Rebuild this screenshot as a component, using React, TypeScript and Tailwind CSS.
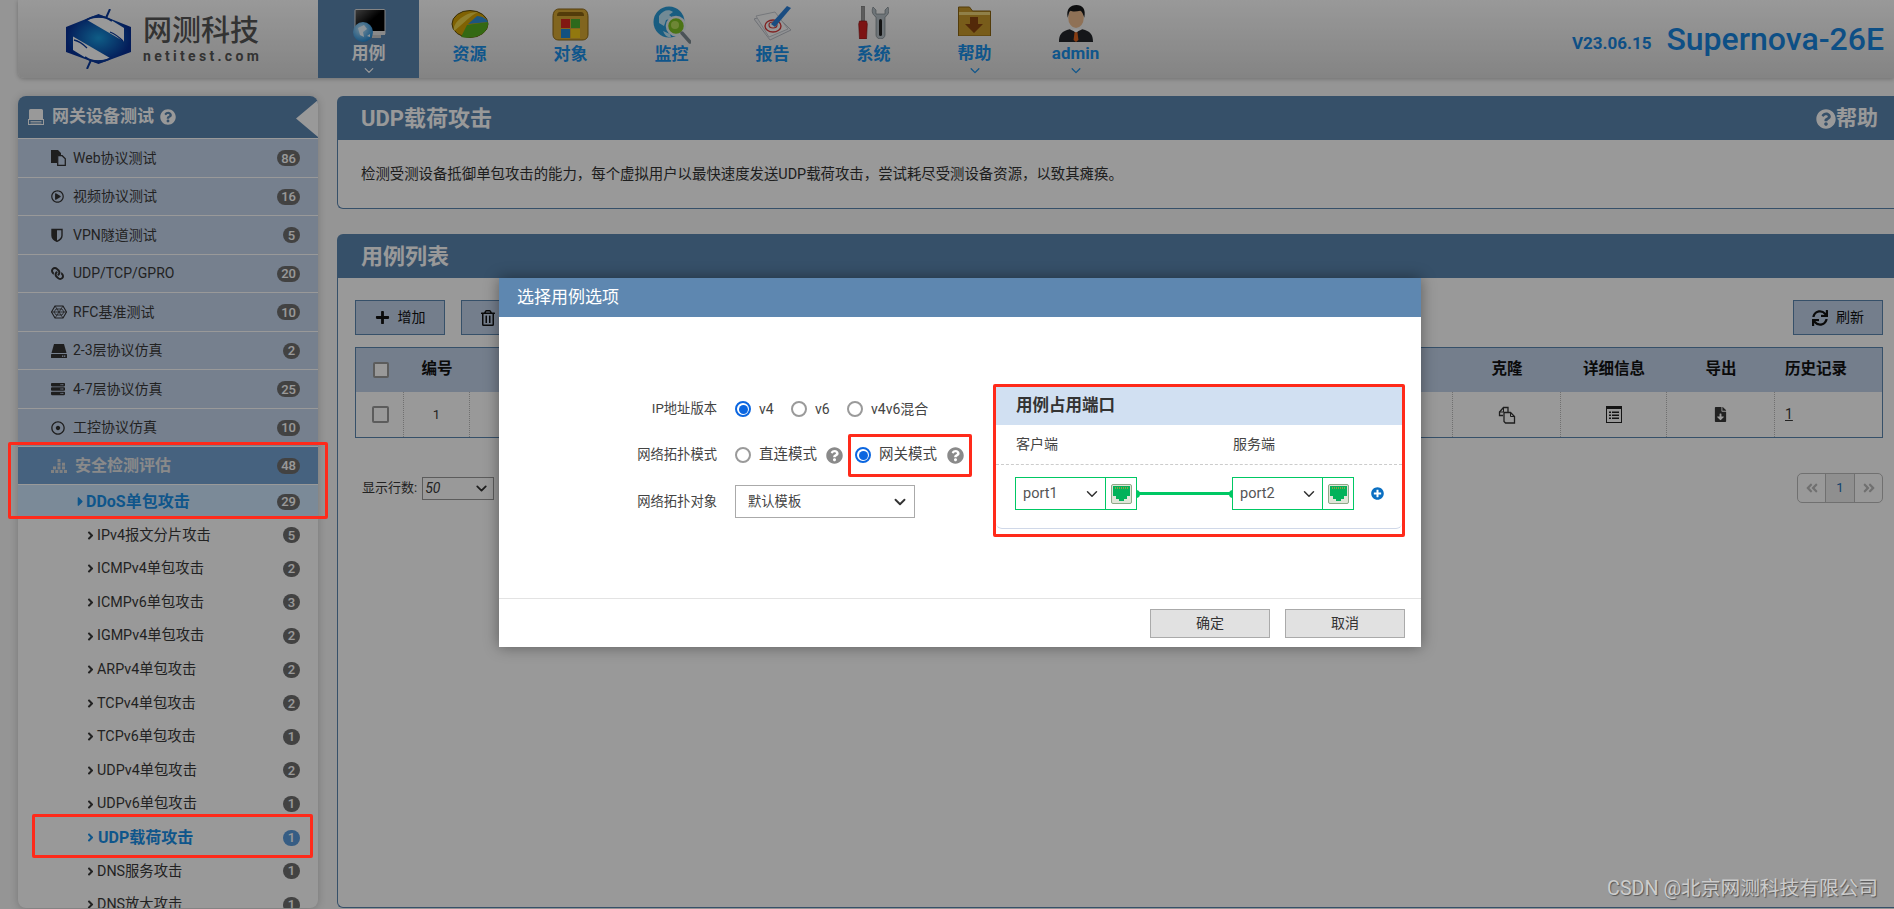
import React from 'react';
import {
  FaQuestionCircle, FaPlus, FaRegTrashAlt, FaSync, FaFileDownload,
  FaAngleDoubleLeft, FaAngleDoubleRight, FaPlusCircle, FaCaretRight, FaAngleRight, FaLink,
  FaRegPlayCircle, FaServer, FaRegDotCircle,
} from 'react-icons/fa';
import { ChevronDown } from 'lucide-react';

const HexIcon = () => (
  <svg width="16" height="14" viewBox="0 0 16 14" fill="none" stroke="#333" strokeWidth="0.8">
    <path d="M4 1h8l3.500 6-3.500 6H4L.5 7z" strokeWidth="1.100" />
    <path d="M4 1l8 12M12 1L4 13M.5 7h15M5 4h6l2 3-2 3H5L3 7z" />
  </svg>
);

const PyramidIcon = () => (
  <svg width="16" height="14" viewBox="0 0 16 14" fill="#d8d8d8">
    <rect x="6.500" y="0" width="3" height="3" />
    <rect x="6.500" y="3.700" width="3" height="3" />
    <rect x="11" y="3.700" width="3" height="3" />
    <rect x="2" y="7.400" width="3" height="3" />
    <rect x="6.500" y="7.400" width="3" height="3" />
    <rect x="11" y="7.400" width="3" height="3" />
    <rect x="0" y="11" width="3" height="3" />
    <rect x="4.300" y="11" width="3" height="3" />
    <rect x="8.600" y="11" width="3" height="3" />
    <rect x="13" y="11" width="3" height="3" />
  </svg>
);

const FilesIcon = () => (
  <svg width="15" height="16" viewBox="0 0 15 16">
    <path d="M0 0h7l3 3v2H6v8H0z" fill="#333" />
    <path d="M6.700 5.700h4.500l3.100 3v6.600H6.700z" fill="none" stroke="#333" strokeWidth="1.300" />
  </svg>
);

const HalfShieldIcon = () => (
  <svg width="12" height="14" viewBox="0 0 12 14">
    <path d="M1 1.500h10v6c0 3-2.500 4.700-5 5.800C3.500 12.200 1 10.500 1 7.500z" fill="none" stroke="#333" strokeWidth="1.400" />
    <path d="M1 1.500h5v11.800C3.500 12.200 1 10.500 1 7.500z" fill="#333" />
  </svg>
);

const DriveIcon = () => (
  <svg width="16" height="14" viewBox="0 0 16 14" fill="#333">
    <path d="M3 0h10l2.500 9H.5z" />
    <rect x="0" y="10" width="16" height="4" rx="0.500" />
    <rect x="11" y="11.500" width="1.300" height="1.300" fill="#c5d5ed" />
    <rect x="13" y="11.500" width="1.300" height="1.300" fill="#c5d5ed" />
  </svg>
);

const TrayIcon = () => (
  <svg width="16" height="16" viewBox="0 0 16 16" fill="#fff">
    <path d="M2.500 0h11A1.500 1.500 0 0 1 15 1.500V10H1V1.500A1.500 1.500 0 0 1 2.500 0z" />
    <rect x="0.500" y="10.500" width="15" height="5" fill="none" stroke="#fff" strokeWidth="1" />
    <path d="M2.500 12.500h11M2.500 14h11" stroke="#fff" strokeWidth="0.800" />
  </svg>
);

const CloneIcon = () => (
  <svg width="18" height="18" viewBox="0 0 18 18" fill="none" stroke="#333" strokeWidth="1.300">
    <path d="M5 9.500H1.500V6L5.500 1.500H10V6" />
    <path d="M6 6.500h6.500l4 4v6.500H7.500L6 15.500z" />
    <path d="M1.500 6H5.500V1.500M12.500 6.500v4h4" strokeWidth="1" />
  </svg>
);

const TableListIcon = () => (
  <svg width="16" height="17" viewBox="0 0 16 17" fill="#222">
    <rect x="0.500" y="0.500" width="15" height="16" fill="none" stroke="#222" />
    <rect x="0" y="0" width="16" height="3" />
    <path d="M3 5.500h2v1.500H3zM6 5.500h7v1.500H6zM3 8.500h2V10H3zM6 8.500h7V10H6zM3 11.500h2V13H3zM6 11.500h7V13H6z" />
  </svg>
);

const Logo = () => (
  <svg width="65" height="60" viewBox="0 0 65 60">
    <defs>
      <radialGradient id="hexg" cx="50%" cy="48%" r="50%">
        <stop offset="0%" stopColor="#1a9be0" />
        <stop offset="100%" stopColor="#072f94" />
      </radialGradient>
    </defs>
    <path d="M32.500 5L65 18v25L32.500 55 0 43V18z" fill="url(#hexg)" />
    <path d="M21 11c8-3 16-3 24 0l13 8v13.500z" fill="#fff" />
    <path d="M7 27.500L44 49c-8 3-16 3-24 0L7 41z" fill="#fff" />
    <path d="M19 12c8-6 19-6 27 0" fill="none" stroke="#0a3a9c" strokeWidth="1.800" />
    <path d="M19 48c8 6 19 6 27 0" fill="none" stroke="#0a3a9c" strokeWidth="1.800" />
    <path d="M44 0l-4 9M21 60l4-9" stroke="#0a3a9c" strokeWidth="2" />
    <path d="M44 23c5 2 9 5 13 9" fill="none" stroke="#0a3a9c" strokeWidth="1.300" />
    <path d="M8 31c5 1 9 4 13 8" fill="none" stroke="#0a3a9c" strokeWidth="1.300" />
  </svg>
);

const CaseIcon = () => (
  <svg width="34" height="34" viewBox="0 0 34 34">
    <defs>
      <linearGradient id="scr" x1="0" y1="0" x2="1" y2="1">
        <stop offset="0%" stopColor="#666" />
        <stop offset="50%" stopColor="#000" />
      </linearGradient>
      <radialGradient id="glb" cx="40%" cy="35%" r="70%">
        <stop offset="0%" stopColor="#bfe8ff" />
        <stop offset="100%" stopColor="#1c86d4" />
      </radialGradient>
    </defs>
    <rect x="3" y="0.500" width="30" height="25" rx="1" fill="url(#scr)" stroke="#ddd" />
    <rect x="3" y="22" width="30" height="4" fill="#e4e4e4" />
    <rect x="20" y="26" width="9" height="3" fill="#ccc" />
    <circle cx="11" cy="23" r="10" fill="url(#glb)" />
    <path d="M6 19l6-3 3 4-4 3 1 5-4-2zM15 27l3-2v3z" fill="#eaf7ff" />
  </svg>
);

const PieIcon = () => (
  <svg width="38" height="29" viewBox="0 0 38 29">
    <ellipse cx="19" cy="14" rx="18" ry="13.500" fill="#d5a306" stroke="#5b4a0a" />
    <path d="M3 21C1 13 14 2 27 2 20 5 12 14 3 21z" fill="#f0d64a" />
    <path d="M10 27l6-12 21-3c1 7-5 13-13 15-5 1-10 1-14 0z" fill="#58b020" />
    <path d="M17 14l9-8c5 0 10 3 11 6z" fill="#2f8fd6" />
  </svg>
);

const ObjectIcon = () => (
  <svg width="37" height="33" viewBox="0 0 37 33">
    <path d="M1 9c0-5 2-8 6-8h23c4 0 6 3 6 8v17c0 4-2 6-6 6H7c-4 0-6-2-6-6z" fill="#d8a934" stroke="#8a6412" />
    <path d="M5 8c0-3 1-4 3-4h21c2 0 3 1 3 4z" fill="#8a6412" />
    <rect x="9" y="11" width="9" height="9" fill="#d8281e" />
    <rect x="19" y="11" width="9" height="9" fill="#4caf2f" />
    <rect x="9" y="21" width="9" height="9" fill="#1f87d8" />
    <rect x="19" y="21" width="9" height="9" fill="#f3c818" />
  </svg>
);

const MonitorIcon = () => (
  <svg width="38" height="38" viewBox="0 0 38 38">
    <circle cx="16" cy="16" r="15.500" fill="#2a9bd8" />
    <path d="M6 10c4-6 10-7 14-4l-4 3 4 3-7 2-2 6-5-3zM10 25l7 3 1 3c-3 1-6-1-8-6z" fill="#bfe7f8" />
    <circle cx="23" cy="20" r="9" fill="#7fc223" stroke="#e7eef0" strokeWidth="2.500" />
    <circle cx="22" cy="19" r="4" fill="#b8e05a" />
    <path d="M29 27l8 9" stroke="#7d8a92" strokeWidth="3.500" strokeLinecap="round" />
  </svg>
);

const ReportIcon = () => (
  <svg width="38" height="36" viewBox="0 0 38 36">
    <path d="M0 14L20 8l17 17-21 10z" fill="#eef0f3" stroke="#b8bcc4" />
    <path d="M2 11l19-4 13 17-19 8z" fill="#fafafa" stroke="#c4c8ce" />
    <ellipse cx="19" cy="21" rx="8" ry="6" fill="none" stroke="#d63a3a" strokeWidth="1.400" />
    <ellipse cx="19" cy="20" rx="4" ry="3" fill="none" stroke="#d63a3a" strokeWidth="1.200" />
    <path d="M17 19L33 1l4 2-16 19z" fill="#2b7fd8" />
  </svg>
);

const ToolsIcon = () => (
  <svg width="31" height="33" viewBox="0 0 31 33">
    <rect x="3.500" y="0" width="3" height="15" fill="#999" stroke="#555" strokeWidth="0.500" />
    <path d="M1.500 15h7l.8 3-.8 15h-7L.7 18z" fill="#d02020" stroke="#7d1010" strokeWidth="0.600" />
    <path d="M15 1c-2 5 0 8 3 10v18c0 2 2 4 4.500 4s4.500-2 4.500-4V11c3-2 5-5 3-10l-3 3v4h-9V4z" fill="#b7c2c8" stroke="#687278" strokeWidth="0.600" />
    <rect x="21" y="13" width="3" height="17" rx="1.500" fill="#222" />
  </svg>
);

const HelpFolderIcon = () => (
  <svg width="33" height="30" viewBox="0 0 33 30">
    <path d="M0.500 1h11l3 4h18v25H.5z" fill="#c99a2c" stroke="#8a6412" />
    <path d="M1 6h31v3H1z" fill="#f1d679" />
    <path d="M12 11h8v7h5l-9 9-9-9h5z" fill="#8a4510" />
  </svg>
);

const AdminIcon = () => (
  <svg width="36" height="37" viewBox="0 0 37 38">
    <path d="M1 38c0-8 3-11 11-13l6.500 3 6.500-3c8 2 11 5 11 13z" fill="#23262b" />
    <path d="M15 25h7l-3.500 4z" fill="#fff" />
    <path d="M17 28h3l1 8-2.500 2-2.500-2z" fill="#e0641e" />
    <ellipse cx="18.500" cy="13" rx="8" ry="10.500" fill="#eebd90" />
    <path d="M10 13C8 4 13 0 19 0s10 4 8 13c-1-3-2-6-4-7-4 1-9 1-10 0-2 1-2 4-3 7z" fill="#17181a" />
  </svg>
);

const navItems = [
  { label: '用例', icon: <CaseIcon />, top: 'pt-[9px]', active: true, chevron: true },
  { label: '资源', icon: <PieIcon />, top: 'pt-[10px]' },
  { label: '对象', icon: <ObjectIcon />, top: 'pt-[8px]' },
  { label: '监控', icon: <MonitorIcon />, top: 'pt-[6px]' },
  { label: '报告', icon: <ReportIcon />, top: 'pt-[5px]' },
  { label: '系统', icon: <ToolsIcon />, top: 'pt-[6px]' },
  { label: '帮助', icon: <HelpFolderIcon />, top: 'pt-[6px]', chevron: true },
  { label: 'admin', icon: <AdminIcon />, top: 'pt-[5px]', chevron: true },
];

const groups = [
  { label: 'Web协议测试', count: 86, icon: <FilesIcon /> },
  { label: '视频协议测试', count: 16, icon: <FaRegPlayCircle size={13} /> },
  { label: 'VPN隧道测试', count: 5, icon: <HalfShieldIcon /> },
  { label: 'UDP/TCP/GPRO', count: 20, icon: <FaLink size={13} className="-scale-x-100" /> },
  { label: 'RFC基准测试', count: 10, icon: <HexIcon /> },
  { label: '2-3层协议仿真', count: 2, icon: <DriveIcon /> },
  { label: '4-7层协议仿真', count: 25, icon: <FaServer size={14} /> },
  { label: '工控协议仿真', count: 10, icon: <FaRegDotCircle size={14} /> },
];

const subItems = [
  { label: 'IPv4报文分片攻击', count: 5 },
  { label: 'ICMPv4单包攻击', count: 2 },
  { label: 'ICMPv6单包攻击', count: 3 },
  { label: 'IGMPv4单包攻击', count: 2 },
  { label: 'ARPv4单包攻击', count: 2 },
  { label: 'TCPv4单包攻击', count: 2 },
  { label: 'TCPv6单包攻击', count: 1 },
  { label: 'UDPv4单包攻击', count: 2 },
  { label: 'UDPv6单包攻击', count: 1 },
  { label: 'UDP载荷攻击', count: 1, active: true },
  { label: 'DNS服务攻击', count: 1 },
  { label: 'DNS放大攻击', count: 1 },
];

const Badge = ({ n, blue }: { n: number; blue?: boolean }) => (
  <span className={`ml-auto flex h-[16px] min-w-[17px] items-center justify-center rounded-full px-[4px] text-[13px] font-medium text-white ${blue ? 'bg-[#5a9bdc]' : 'bg-[#6f6f6f]'}`}>
    {n}
  </span>
);

const Radio = ({ checked }: { checked?: boolean }) => (
  <span className={`flex h-[16px] w-[16px] shrink-0 items-center justify-center rounded-full border-2 ${checked ? 'border-[#0b66e0]' : 'border-[#9a9a9a]'}`}>
    {checked && <span className="h-[9px] w-[9px] rounded-full bg-[#0b66e0]" />}
  </span>
);

const PortIcon = () => (
  <svg width="21" height="20" viewBox="0 0 21 20">
    <rect x="0.500" y="0.500" width="20" height="19" rx="1.500" fill="#dfe5d8" stroke="#8fa888" />
    <path d="M2 2h17v10h-3v3h-3v2H8v-2H5v-3H2z" fill="#00b25a" />
    <path d="M4 4h13" stroke="#b59a3a" strokeWidth="1.500" strokeDasharray="1 1" />
  </svg>
);

const PortSelect = ({ name }: { name: string }) => (
  <div className="flex h-[33px] w-[122px] shrink-0 items-center border border-[#00c864]">
    <div className="flex h-full w-[90px] items-center justify-between border-r border-[#00c864] pl-[7px] pr-[4px] text-[14.500px] text-[#555]">
      {name}
      <ChevronDown size={18} strokeWidth={2} className="text-[#333]" />
    </div>
    <div className="flex flex-1 items-center justify-center">
      <PortIcon />
    </div>
  </div>
);

const Help = () => <FaQuestionCircle size={17} className="shrink-0 text-[#8a8a8a]" />;

const App: React.FC = () => {
  return (
    <div className="relative flex h-screen w-full flex-col overflow-hidden bg-[#f8f8f8] [font-family:Roboto,'Noto_Sans_CJK_SC',sans-serif] text-[#3a3a3a]">
      {/* Top bar */}
      <header className="ml-[18px] flex h-[78px] shrink-0 rounded-bl-[6px] bg-gradient-to-b from-white to-[#dcdcdc] shadow-[0_1px_4px_rgba(0,0,0,0.25)]">
        <div className="flex w-[300px] items-center gap-[12px] pl-[48px]">
          <Logo />
          <div className="flex flex-col text-[#555]">
            <span className="text-[29px] font-medium leading-[34px]">网测科技</span>
            <span className="text-[14px] font-bold leading-[16px] tracking-[3.300px]">netitest.com</span>
          </div>
        </div>
        {navItems.map((item) => (
          <div
            key={item.label}
            className={`flex w-[101px] flex-col items-center ${item.active ? 'bg-[#5b85af] text-white' : 'text-[#1a8fe8]'}`}
          >
            <div className={`flex h-[44px] justify-center ${item.top}`}>{item.icon}</div>
            <span className="text-[17px] font-bold leading-[21px]">{item.label}</span>
            {item.chevron && <ChevronDown size={16} strokeWidth={2} className="-mt-[1px]" />}
          </div>
        ))}
        <div className="ml-auto flex items-center gap-[15px] pr-[10px] text-[#1784de]">
          <span className="mt-[10px] text-[17px] font-bold">V23.06.15</span>
          <span className="text-[32px] font-medium leading-none">Supernova-26E</span>
        </div>
      </header>

      <div className="flex min-h-0 flex-1 gap-[19px] pb-[1px] pl-[18px] pt-[18px]">
        {/* Sidebar */}
        <aside className="relative w-[300px] shrink-0 overflow-hidden rounded-[8px] bg-white shadow-[0_1px_8px_rgba(0,0,0,0.2)]">
          <div className="relative flex h-[42px] items-center bg-[#5b85af] pl-[10px] text-white">
            <TrayIcon />
            <span className="ml-[8px] text-[17px] font-bold">网关设备测试</span>
            <FaQuestionCircle size={16} className="ml-[6px]" />
            <div className="absolute right-0 top-[4px] h-[37px] w-[22px] bg-white [clip-path:polygon(100%_0,0_50%,100%_100%)]" />
          </div>
          {groups.map((g) => (
            <div key={g.label} className="flex h-[38.500px] items-center border-t border-white bg-[#c5d5ed] pl-[33px] pr-[18px] pt-[1px] text-[14px]">
              <span className="flex w-[22px] shrink-0 items-center text-[#333]">{g.icon}</span>
              {g.label}
              <Badge n={g.count} />
            </div>
          ))}
          <div className="flex h-[38px] items-center border-t border-white bg-[#76a3d4] pl-[33px] pr-[18px]">
            <span className="w-[24px] shrink-0"><PyramidIcon /></span>
            <span className="text-[16px] font-bold text-[#e6e6e6]">安全检测评估</span>
            <Badge n={48} />
          </div>
          <div className="flex h-[34px] items-center border-t border-white bg-[#cde6fd] pl-[57px] pr-[18px] text-[#1a8fe8]">
            <FaCaretRight size={15} className="w-[11px] shrink-0" />
            <span className="text-[16px] font-bold">DDoS单包攻击</span>
            <Badge n={29} />
          </div>
          {subItems.map((s) => (
            <div key={s.label} className="flex h-[33.600px] items-center pl-[67px] pr-[18px] pt-[1px]">
              <FaAngleRight size={13} className={`mr-[1px] w-[11px] shrink-0 ${s.active ? 'text-[#1a8fe8]' : ''}`} />
              <span className={s.active ? 'ml-[1px] text-[16px] font-bold text-[#1a8fe8]' : 'text-[14.300px]'}>{s.label}</span>
              <Badge n={s.count} blue={s.active} />
            </div>
          ))}
        </aside>

        {/* Main */}
        <main className="flex min-w-0 flex-1 flex-col gap-[25px]">
          <section className="shrink-0">
            <div className="flex h-[44px] items-center justify-between rounded-tl-[6px] bg-[#5b85af] pl-[24px] pr-[16px] pt-[1px] text-white">
              <h1 className="text-[22px] font-bold">UDP载荷攻击</h1>
              <span className="flex items-center text-[21px] font-bold"><FaQuestionCircle size={20} />帮助</span>
            </div>
            <div className="flex h-[69px] items-center rounded-bl-[6px] border-b border-l border-[#5b85af] bg-white pl-[23px] pt-[2px] text-[14.400px] text-[#333]">
              检测受测设备抵御单包攻击的能力，每个虚拟用户以最快速度发送UDP载荷攻击，尝试耗尽受测设备资源，以致其瘫痪。
            </div>
          </section>

          <section className="flex min-h-0 flex-1 flex-col">
            <div className="flex h-[44px] shrink-0 items-center rounded-tl-[6px] bg-[#5b85af] pl-[24px] text-[22px] font-bold text-white">
              用例列表
            </div>
            <div className="flex-1 rounded-bl-[6px] border-b border-l border-[#5b85af] bg-white pb-[10px] pl-[17px] pr-[11px] pt-[22px]">
              <div className="flex h-[35px] items-stretch gap-[16px] text-[14px] text-[#111]">
                <div className="flex w-[90px] items-center justify-center gap-[8px] border border-[#5b85af] bg-[#c1d2e9]">
                  <FaPlus size={15} />增加
                </div>
                <div className="flex w-[90px] items-center justify-center gap-[8px] border border-[#5b85af] bg-[#c1d2e9]">
                  <FaRegTrashAlt size={16} />删除
                </div>
                <div className="ml-auto flex w-[90px] items-center justify-center gap-[8px] border border-[#5b85af] bg-[#c1d2e9]">
                  <FaSync size={16} />刷新
                </div>
              </div>

              <div className="mt-[12px] border border-[#5b85af]">
                <div className="grid h-[44px] grid-cols-[48px_66px_1fr_108px_106px_108px_107px] items-center bg-[#c1d2e9] text-center text-[15.500px] font-bold text-[#111]">
                  <span className="ml-[17px] h-[16px] w-[16px] rounded-[2px] border-2 border-[#999] bg-white" />
                  <span>编号</span>
                  <span />
                  <span>克隆</span>
                  <span>详细信息</span>
                  <span>导出</span>
                  <span className="pl-[10px] text-left">历史记录</span>
                </div>
                <div className="grid h-[45px] grid-cols-[48px_66px_1fr_108px_106px_108px_107px] items-stretch text-[13px]">
                  <span className="flex items-center border-r border-dotted border-[#bbb] pl-[16px]">
                    <span className="h-[17px] w-[17px] rounded-[2px] border-2 border-[#999] bg-white" />
                  </span>
                  <span className="flex items-center justify-center border-r border-dotted border-[#bbb]">1</span>
                  <span className="border-r border-dotted border-[#bbb]" />
                  <span className="flex items-center justify-center border-r border-dotted border-[#bbb]"><CloneIcon /></span>
                  <span className="flex items-center justify-center border-r border-dotted border-[#bbb]"><TableListIcon /></span>
                  <span className="flex items-center justify-center border-r border-dotted border-[#bbb]"><FaFileDownload size={15} /></span>
                  <span className="flex items-center pl-[10px] text-[14px] underline">1</span>
                </div>
              </div>

              <div className="mt-[35px] flex h-[30px] items-center justify-between">
                <div className="ml-[7px] flex items-center gap-[5px] text-[13px]">
                  显示行数:
                  <span className="flex h-[23px] w-[72px] items-center justify-between border border-[#999] pl-[2px] pr-[3px] text-[14px] italic">
                    50
                    <ChevronDown size={17} strokeWidth={2.500} className="text-[#333]" />
                  </span>
                </div>
                <div className="flex h-[30px] w-[86px] items-stretch rounded-[5px] border border-[#bbb] text-[#bbb]">
                  <span className="flex w-[27px] items-center justify-center"><FaAngleDoubleLeft size={14} /></span>
                  <span className="flex w-[30px] items-center justify-center border-x border-[#bbb] bg-[#eee] text-[13px] text-[#1a6fb8]">1</span>
                  <span className="flex flex-1 items-center justify-center"><FaAngleDoubleRight size={14} /></span>
                </div>
              </div>
            </div>
          </section>
        </main>
      </div>

      {/* Dimming layer */}
      <div className="absolute inset-0 z-10 bg-black/40" />

      {/* Annotations */}
      <div className="absolute left-[8px] top-[442px] z-20 h-[77px] w-[320px] rounded-[2px] border-[3px] border-[#ff2a1a]" />
      <div className="absolute left-[32px] top-[814px] z-20 h-[44px] w-[281px] rounded-[2px] border-[3px] border-[#ff2a1a]" />

      {/* Modal */}
      <div className="absolute left-[499px] top-[278px] z-20 flex h-[369px] w-[922px] flex-col bg-white shadow-[0_0_14px_rgba(0,0,0,0.4)]">
        <div className="flex h-[39px] shrink-0 items-center bg-[#5e87b0] pl-[18px] text-[17px] text-white">选择用例选项</div>

        <div className="flex flex-1 text-[13.300px] text-[#444]">
          <div className="ml-[135px] mt-[69px] flex w-[355px] flex-col">
            <div className="flex h-[46px] items-center">
              <span className="w-[83px] whitespace-nowrap text-right">IP地址版本</span>
              <div className="ml-[18px] flex items-center text-[14px]">
                <Radio checked /><span className="ml-[8px] w-[32px]">v4</span>
                <Radio /><span className="ml-[8px] w-[32px]">v6</span>
                <Radio /><span className="ml-[8px]">v4v6混合</span>
              </div>
            </div>
            <div className="flex h-[46px] items-center">
              <span className="w-[83px] whitespace-nowrap text-right">网络拓扑模式</span>
              <div className="ml-[18px] flex items-center text-[14.500px]">
                <Radio /><span className="ml-[8px]">直连模式</span>
                <span className="ml-[9px] mr-[5px]"><Help /></span>
                <div className="flex h-[43px] w-[124px] items-center rounded-[2px] border-[3px] border-[#ff2a1a] pl-[4px]">
                  <Radio checked /><span className="ml-[8px]">网关模式</span>
                  <span className="ml-[10px]"><Help /></span>
                </div>
              </div>
            </div>
            <div className="flex h-[47px] items-center">
              <span className="w-[83px] whitespace-nowrap text-right">网络拓扑对象</span>
              <div className="ml-[18px] flex h-[33px] w-[180px] items-center justify-between border border-[#aaa] pl-[12px] pr-[5px]">
                默认模板
                <ChevronDown size={18} strokeWidth={2.500} className="text-[#333]" />
              </div>
            </div>
          </div>

          <div className="ml-[4px] mt-[67px] h-[153px] w-[412px] rounded-[2px] border-[3px] border-[#ff2a1a]">
            <div className="h-[142px] overflow-hidden rounded-b-[6px] border-b border-[#d0d8e8]">
              <div className="flex h-[38px] items-center bg-[#d1e0f2] pl-[20px] text-[16.500px] font-bold text-[#333]">用例占用端口</div>
              <div className="flex h-[40px] items-center border-b border-dashed border-[#ccc] pl-[20px] text-[14px]">
                <span className="w-[217px]">客户端</span>
                <span>服务端</span>
              </div>
              <div className="flex items-center pl-[19px] pt-[12px]">
                <PortSelect name="port1" />
                <div className="relative h-[3px] w-[95px] bg-[#00c864]">
                  <span className="absolute -left-[1px] -top-[2.500px] h-[8px] w-[4px] rounded-r-full bg-[#00c864]" />
                  <span className="absolute -right-[1px] -top-[2.500px] h-[8px] w-[4px] rounded-l-full bg-[#00c864]" />
                </div>
                <PortSelect name="port2" />
                <FaPlusCircle size={13} className="ml-[17px] text-[#0a6fc2]" />
              </div>
            </div>
          </div>
        </div>

        <div className="flex h-[49px] shrink-0 items-start justify-end gap-[15px] border-t border-[#e3e3e3] pr-[16px] pt-[10px] text-[14px] text-[#333]">
          <div className="flex h-[29px] w-[120px] items-center justify-center border border-[#aaa] bg-[#e1e1e1]">确定</div>
          <div className="flex h-[29px] w-[120px] items-center justify-center border border-[#aaa] bg-[#e1e1e1]">取消</div>
        </div>
      </div>

      {/* Watermark */}
      <div className="absolute bottom-[5px] right-[16px] z-30 text-[19.700px] text-[#cccccc] [text-shadow:1px_1px_1px_#555]">
        CSDN @北京网测科技有限公司
      </div>
    </div>
  );
};

export default App;
